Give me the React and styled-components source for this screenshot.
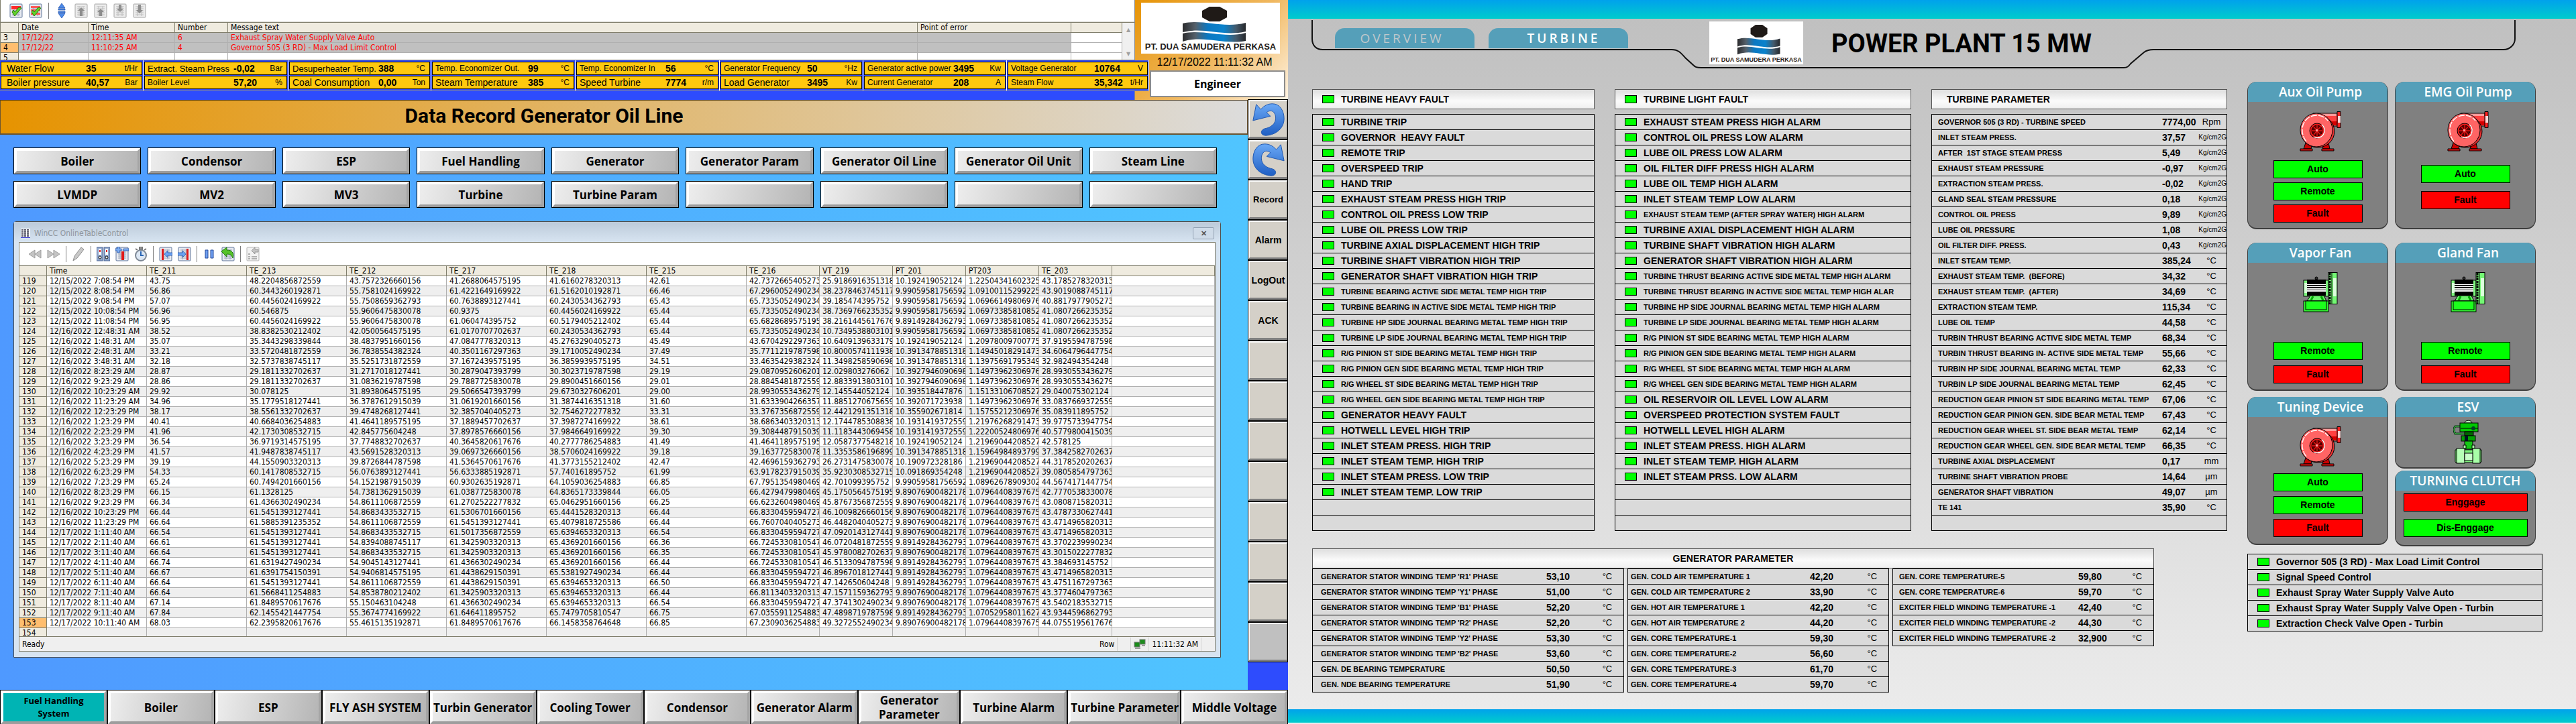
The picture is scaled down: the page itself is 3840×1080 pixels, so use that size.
import React from "react";
import styled, { createGlobalStyle, css } from "styled-components";

const TABLE_FONT = '"DejaVu Sans Condensed", "DejaVu Sans", sans-serif';
const UI_FONT = '"Open Sans", "Noto Sans", sans-serif';
const PLAIN_FONT = '"Liberation Sans", Arial, sans-serif';
const TITLE_FONT = 'Roboto, "Liberation Sans", sans-serif';

const GlobalStyle = createGlobalStyle`
  *, *::before, *::after { box-sizing: border-box; }
  body { margin: 0; background: #fff; color: #000; font-family: ${PLAIN_FONT}; }
  button { font: inherit; color: inherit; margin: 0; padding: 0; cursor: pointer; }
  svg { display: block; }
`;

/* ---------- data ---------- */

const ALARMS = [
  { no: 3, date: "17/12/22", time: "12:11:35 AM", number: 6, text: "Exhaust Spray Water Supply Valve Auto" },
  { no: 4, date: "17/12/22", time: "11:10:25 AM", number: 4, text: "Governor 505 (3 RD) - Max Load Limit Control", current: true },
];

const READINGS = [
  [["Water Flow", "35", "t/Hr", 14], ["Boiler pressure", "40,57", "Bar", 14]],
  [["Extract. Steam Press", "-0,02", "Bar", 13], ["Boiler Level", "57,20", "%", 12]],
  [["Desuperheater Temp.", "388", "°C", 13], ["Coal Consumption", "0,00", "Ton", 14]],
  [["Temp. Economizer Out.", "99", "°C", 12], ["Steam Temperature", "385", "°C", 14]],
  [["Temp. Economizer In", "56", "°C", 12], ["Speed Turbine", "7774", "r/m", 14]],
  [["Generator Frequency", "50", "°Hz", 12], ["Load Generator", "3495", "Kw", 14]],
  [["Generator active power", "3495", "Kw", 12], ["Current Generator", "208", "A", 12]],
  [["Voltage Generator", "10764", "V", 12], ["Steam Flow", "35,342", "t/Hr", 12]],
];

/* Width of the label column in each pair of readings. */
const LABEL_WIDTHS = [118, 128, 128, 138, 128, 124, 128, 124];

const PAGE_LINKS = [
  "Boiler", "Condensor", "ESP", "Fuel Handling", "Generator", "Generator Param", "Generator Oil Line", "Generator Oil Unit", "Steam Line",
  "LVMDP", "MV2", "MV3", "Turbine", "Turbine Param", "", "", "", "",
];

const SIDE_LINKS = ["Record", "Alarm", "LogOut", "ACK", "", "", "", "", "", "", "", ""];

const SYSTEM_LINKS = [
  { label: "Fuel Handling System", active: true, wrap: true },
  { label: "Boiler" }, { label: "ESP" }, { label: "FLY ASH SYSTEM" }, { label: "Turbin Generator" },
  { label: "Cooling Tower" }, { label: "Condensor" }, { label: "Generator Alarm" },
  { label: "Generator Parameter", wrap: true },
  { label: "Turbine Alarm" }, { label: "Turbine Parameter" }, { label: "Middle Voltage" },
];

const TREND_COLUMNS = ["TE_211", "TE_213", "TE_212", "TE_217", "TE_218", "TE_215", "TE_216", "VT_219", "PT_201", "PT203", "TE_203"];

const TREND_ROWS = `
12/15/2022 7:08:54 PM|43.75|48.2204856872559|43.7572326660156|41.2688064575195|41.6160278320313|42.61|42.7372665405273|25.9186916351318|10.192419052124|1.22504341602325|43.1785278320313
12/15/2022 8:08:54 PM|56.86|60.3443260192871|55.7581024169922|61.4221649169922|61.5162010192871|66.46|67.2960052490234|38.2378463745117|9.99059581756592|1.09100115299225|43.9019088745117
12/15/2022 9:08:54 PM|57.07|60.4456024169922|55.7508659362793|60.7638893127441|60.2430534362793|65.43|65.7335052490234|39.185474395752|9.99059581756592|1.06966149806976|40.8817977905273
12/15/2022 10:08:54 PM|56.96|60.546875|55.9606475830078|60.9375|60.4456024169922|65.44|65.7335052490234|38.7369766235352|9.99059581756592|1.06973385810852|41.0807266235352
12/15/2022 11:08:54 PM|56.95|60.4456024169922|55.9606475830078|61.060474395752|60.5179405212402|65.44|65.6828689575195|38.2161445617676|9.89149284362793|1.06973385810852|41.0807266235352
12/16/2022 12:48:31 AM|38.52|38.8382530212402|42.0500564575195|61.0170707702637|60.2430534362793|65.44|65.7335052490234|10.7349538803101|9.99059581756592|1.06973385810852|41.0807266235352
12/16/2022 1:48:31 AM|35.07|35.3443298339844|38.4837951660156|47.0847778320313|45.2763290405273|45.49|43.6704292297363|10.6409139633179|10.192419052124|1.20978009700775|37.9195594787598
12/16/2022 2:48:31 AM|33.21|33.5720481872559|36.7838554382324|40.3501167297363|39.1710052490234|37.49|35.7711219787598|10.8000574111938|10.3913478851318|1.14945018291473|34.6064796447754
12/16/2022 3:48:31 AM|32.18|32.5737838745117|35.5251731872559|37.1672439575195|36.3859939575195|34.51|33.4635429382324|11.3498258590698|10.3913478851318|1.13975691795349|32.982494354248
12/16/2022 8:23:29 AM|28.87|29.1811332702637|31.2717018127441|30.2879047393799|30.3023719787598|29.19|29.0870952606201|12.029803276062|10.3927946090698|1.14973962306976|28.9930553436279
12/16/2022 9:23:29 AM|28.86|29.1811332702637|31.0836219787598|29.7887725830078|29.8900451660156|29.01|28.8845481872559|12.8833913803101|10.3927946090698|1.14973962306976|28.9930553436279
12/16/2022 10:23:29 AM|29.92|30.078125|31.8938064575195|29.5066547393799|29.6730327606201|29.00|28.9930553436279|12.145544052124|10.393518447876|1.15133106708527|29.040075302124
12/16/2022 11:23:29 AM|34.96|35.1779518127441|36.3787612915039|31.0619201660156|31.3874416351318|31.60|31.6333904266357|11.8851270675659|10.392071723938|1.14973962306976|33.0837669372559
12/16/2022 12:23:29 PM|38.17|38.5561332702637|39.4748268127441|32.3857040405273|32.7546272277832|33.31|33.3767356872559|12.4421291351318|10.355902671814|1.15755212306976|35.083911895752
12/16/2022 1:23:29 PM|40.41|40.6684036254883|41.4641189575195|37.1889457702637|37.3987274169922|38.61|38.6863403320313|12.1744785308838|10.1931419372559|1.21976268291473|39.9775733947754
12/16/2022 2:23:29 PM|41.96|42.1730308532715|42.845775604248|37.8978576660156|37.9846649169922|39.30|39.3084487915039|11.1183443069458|10.1931419372559|1.22200524806976|40.5779800415039
12/16/2022 3:23:29 PM|36.54|36.9719314575195|37.7748832702637|40.3645820617676|40.2777786254883|41.49|41.4641189575195|12.0587377548218|10.192419052124|1.21969044208527|42.578125
12/16/2022 4:23:29 PM|41.57|41.9487838745117|43.5691528320313|39.0697326660156|38.5706024169922|39.18|39.1637725830078|11.3353586196899|10.3913478851318|1.15964984893799|37.3842582702637
12/16/2022 5:23:29 PM|39.19|44.1550903320313|39.8726844787598|41.5364570617676|41.3773155212402|42.47|42.4696159362793|26.2731475830078|10.190972328186|1.21969044208527|44.3178520202637
12/16/2022 6:23:29 PM|54.33|60.1417808532715|56.0763893127441|56.6333885192871|57.740161895752|61.99|63.9178237915039|35.9230308532715|10.091869354248|1.21969044208527|39.0805854797363
12/16/2022 7:23:29 PM|65.24|60.7494201660156|54.1521987915039|60.9302635192871|64.1059036254883|66.85|67.7951354980469|42.701099395752|9.99059581756592|1.08962678909302|44.5674171447754
12/16/2022 8:23:29 PM|66.15|61.1328125|54.7381362915039|61.0387725830078|64.8365173339844|66.05|66.4279479980469|45.1750564575195|9.89076900482178|1.07964408397675|42.7770538330078
12/16/2022 9:23:29 PM|66.34|61.4366302490234|54.8611106872559|61.2702522277832|65.0462951660156|66.25|66.6232604980469|45.8767356872559|9.89076900482178|1.07964408397675|43.0808715820313
12/16/2022 10:23:29 PM|66.44|61.5451393127441|54.8683433532715|61.5306701660156|65.4441528320313|66.44|66.8330459594727|46.1009826660156|9.89076900482178|1.07964408397675|43.4787330627441
12/16/2022 11:23:29 PM|66.64|61.5885391235352|54.8611106872559|61.5451393127441|65.4079818725586|66.44|66.7607040405273|46.4482040405273|9.89076900482178|1.07964408397675|43.4714965820313
12/17/2022 1:11:40 AM|66.54|61.5451393127441|54.8683433532715|61.5017356872559|65.6394653320313|66.54|66.8330459594727|47.0920143127441|9.89076900482178|1.07964408397675|43.4714965820313
12/17/2022 2:11:40 AM|66.61|61.5451393127441|54.8394088745117|61.3425903320313|65.4369201660156|66.36|66.7245330810547|46.0720481872559|9.89149284362793|1.07964408397675|43.3702239990234
12/17/2022 3:11:40 AM|66.64|61.5451393127441|54.8683433532715|61.3425903320313|65.4369201660156|66.35|66.7245330810547|45.9780082702637|9.89076900482178|1.07964408397675|43.3015022277832
12/17/2022 4:11:40 AM|66.74|61.6319427490234|54.9045143127441|61.4366302490234|65.4369201660156|66.44|66.7245330810547|46.5133094787598|9.89149284362793|1.07964408397675|43.384693145752
12/17/2022 5:11:40 AM|66.67|61.6391754150391|54.9406814575195|61.4438629150391|65.5381927490234|66.44|66.8330459594727|46.8967018127441|9.89149284362793|1.07964408397675|43.4714965820313
12/17/2022 6:11:40 AM|66.64|61.5451393127441|54.8611106872559|61.4438629150391|65.6394653320313|66.50|66.8330459594727|47.142650604248|9.89149284362793|1.07964408397675|43.4751167297363
12/17/2022 7:11:40 AM|66.64|61.5668411254883|54.8538780212402|61.3425903320313|65.6394653320313|66.44|66.8113403320313|47.1571159362793|9.89076900482178|1.07964408397675|43.3774604797363
12/17/2022 8:11:40 AM|67.14|61.8489570617676|55.150463104248|61.4366302490234|65.6394653320313|66.54|66.8330459594727|47.3741302490234|9.89076900482178|1.07964408397675|43.5402183532715
12/17/2022 9:11:40 AM|67.84|62.1455421447754|55.3674774169922|61.646411895752|65.7479705810547|66.75|67.0355911254883|47.4898719787598|9.89149284362793|1.07052958011627|43.9344596862793
12/17/2022 10:11:40 AM|68.03|62.2395820617676|55.4615135192871|61.8489570617676|66.1458358764648|66.85|67.2309036254883|49.3272552490234|9.89076900482178|1.07964408397675|44.0755195617676
`.trim().split("\n").map((line) => line.split("|"));

const FIRST_ROW = 119;

/* A leading "~" marks the long entries that are set in the smaller size. */
const HEAVY_FAULTS = [
  "TURBINE TRIP", "GOVERNOR\u00a0 HEAVY FAULT", "REMOTE TRIP", "OVERSPEED TRIP", "HAND TRIP",
  "EXHAUST STEAM PRESS HIGH TRIP", "CONTROL OIL PRESS LOW TRIP", "LUBE OIL PRESS LOW TRIP",
  "TURBINE AXIAL DISPLACEMENT HIGH TRIP", "TURBINE SHAFT VIBRATION HIGH TRIP", "GENERATOR SHAFT VIBRATION HIGH TRIP",
  "~TURBINE BEARING ACTIVE SIDE METAL TEMP HIGH TRIP", "~TURBINE BEARING IN ACTIVE SIDE METAL TEMP HIGH TRIP",
  "~TURBINE HP SIDE JOURNAL BEARING METAL TEMP HIGH TRIP", "~TURBINE LP SIDE JOURNAL BEARING METAL TEMP HIGH TRIP",
  "~R/G PINION ST SIDE BEARING METAL TEMP HIGH TRIP", "~R/G PINION GEN SIDE BEARING METAL TEMP HIGH TRIP",
  "~R/G WHEEL ST SIDE BEARING METAL TEMP HIGH TRIP", "~R/G WHEEL GEN SIDE BEARING METAL TEMP HIGH TRIP",
  "GENERATOR HEAVY FAULT", "HOTWELL LEVEL HIGH TRIP", "INLET STEAM PRESS. HIGH TRIP",
  "INLET STEAM TEMP. HIGH TRIP", "INLET STEAM PRESS. LOW TRIP", "INLET STEAM TEMP. LOW TRIP", "", "",
];

const LIGHT_FAULTS = [
  "EXHAUST STEAM PRESS HIGH ALARM", "CONTROL OIL PRESS LOW ALARM", "LUBE OIL PRESS LOW ALARM",
  "OIL FILTER DIFF PRESS HIGH ALARM", "LUBE OIL TEMP HIGH ALARM", "INLET STEAM TEMP LOW ALARM",
  "~EXHAUST STEAM TEMP (AFTER SPRAY WATER) HIGH ALARM", "TURBINE AXIAL DISPLACEMENT HIGH ALARM",
  "TURBINE SHAFT VIBRATION HIGH ALARM", "GENERATOR SHAFT VIBRATION HIGH ALARM",
  "~TURBINE THRUST BEARING ACTIVE SIDE METAL TEMP HIGH ALARM", "~TURBINE THRUST BEARING IN ACTIVE SIDE METAL TEMP HIGH ALAR",
  "~TURBINE HP SIDE JOURNAL BEARING METAL TEMP HIGH ALARM", "~TURBINE LP SIDE JOURNAL BEARING METAL TEMP HIGH ALARM",
  "~R/G PINION ST SIDE BEARING METAL TEMP HIGH ALARM", "~R/G PINION GEN SIDE BEARING METAL TEMP HIGH ALARM",
  "~R/G WHEEL ST SIDE BEARING METAL TEMP HIGH ALARM", "~R/G WHEEL GEN SIDE BEARING METAL TEMP HIGH ALARM",
  "OIL RESERVOIR OIL LEVEL LOW ALARM", "OVERSPEED PROTECTION SYSTEM FAULT", "HOTWELL LEVEL HIGH ALARM",
  "INLET STEAM PRESS. HIGH ALARM", "INLET STEAM TEMP. HIGH ALARM", "INLET STEAM PRSS. LOW ALARM", "", "", "",
];

const TURBINE_PARAMS = [
  ["GOVERNOR 505 (3 RD) - TURBINE SPEED", "7774,00", "Rpm"],
  ["INLET STEAM PRESS.", "37,57", "Kg/cm2G"],
  ["AFTER\u00a0 1ST STAGE STEAM PRESS", "5,49", "Kg/cm2G"],
  ["EXHAUST STEAM PRESSURE", "-0,97", "Kg/cm2G"],
  ["EXTRACTION STEAM PRESS.", "-0,02", "Kg/cm2G"],
  ["GLAND SEAL STEAM PRESSURE", "0,18", "Kg/cm2G"],
  ["CONTROL OIL PRESS", "9,89", "Kg/cm2G"],
  ["LUBE OIL PRESSURE", "1,08", "Kg/cm2G"],
  ["OIL FILTER DIFF. PRESS.", "0,43", "Kg/cm2G"],
  ["INLET STEAM TEMP.", "385,24", "°C"],
  ["EXHAUST STEAM TEMP.\u00a0 (BEFORE)", "34,32", "°C"],
  ["EXHAUST STEAM TEMP.\u00a0 (AFTER)", "34,69", "°C"],
  ["EXTRACTION STEAM TEMP.", "115,34", "°C"],
  ["LUBE OIL TEMP", "44,58", "°C"],
  ["TURBIN THRUST BEARING ACTIVE SIDE METAL TEMP", "68,34", "°C"],
  ["TURBIN THRUST BEARING IN- ACTIVE SIDE METAL TEMP", "55,66", "°C"],
  ["TURBIN HP SIDE JOURNAL BEARING METAL TEMP", "62,33", "°C"],
  ["TURBIN LP SIDE JOURNAL BEARING METAL TEMP", "62,45", "°C"],
  ["REDUCTION GEAR PINION ST SIDE BEARING METAL TEMP", "67,06", "°C"],
  ["REDUCTION GEAR PINION GEN. SIDE BEAR METAL TEMP", "67,43", "°C"],
  ["REDUCTION GEAR WHEEL ST. SIDE BEAR METAL TEMP", "62,14", "°C"],
  ["REDUCTION GEAR WHEEL GEN. SIDE BEAR METAL TEMP", "66,35", "°C"],
  ["TURBINE AXIAL DISPLACEMENT", "0,17", "mm"],
  ["TURBINE SHAFT VIBRATION PROBE", "14,64", "µm"],
  ["GENERATOR SHAFT VIBRATION", "49,07", "µm"],
  ["TE 141", "35,90", "°C"],
  ["", "", ""],
];

const GENERATOR_PARAMS = [
  {
    indent: 12, valueAt: 348,
    rows: [
      ["GENERATOR STATOR WINDING TEMP 'R1' PHASE", "53,10"],
      ["GENERATOR STATOR WINDING TEMP 'Y1' PHASE", "51,00"],
      ["GENERATOR STATOR WINDING TEMP 'B1' PHASE", "52,20"],
      ["GENERATOR STATOR WINDING TEMP 'R2' PHASE", "52,20"],
      ["GENERATOR STATOR WINDING TEMP 'Y2' PHASE", "53,30"],
      ["GENERATOR STATOR WINDING TEMP 'B2' PHASE", "53,60"],
      ["GEN. DE BEARING TEMPERATURE", "50,50"],
      ["GEN. NDE BEARING TEMPERATURE", "51,90"],
    ],
  },
  {
    indent: 4, valueAt: 271,
    rows: [
      ["GEN. COLD AIR TEMPERATURE 1", "42,20"],
      ["GEN. COLD AIR TEMPERATURE 2", "33,90"],
      ["GEN. HOT AIR TEMPERATURE 1", "42,20"],
      ["GEN. HOT AIR TEMPERATURE 2", "44,20"],
      ["GEN. CORE TEMPERATURE-1", "59,30"],
      ["GEN. CORE TEMPERATURE-2", "56,60"],
      ["GEN. CORE TEMPERATURE-3", "61,70"],
      ["GEN. CORE TEMPERATURE-4", "59,70"],
    ],
  },
  {
    indent: 9, valueAt: 276,
    rows: [
      ["GEN. CORE TEMPERATURE-5", "59,80"],
      ["GEN. CORE TEMPERATURE-6", "59,70"],
      ["EXCITER FIELD WINDING TEMPERATURE -1", "42,40"],
      ["EXCITER FIELD WINDING TEMPERATURE -2", "44,30"],
      ["EXCITER FIELD WINDING TEMPERATURE -2", "32,900"],
    ],
  },
];

const SIGNALS = [
  "Governor 505 (3 RD) - Max Load Limit Control",
  "Signal Speed Control",
  "Exhaust Spray Water Supply Valve Auto",
  "Exhaust Spray Water Supply Valve Open - Turbin",
  "Extraction Check Valve Open - Turbin",
];

/* ---------- drawings ---------- */

function LogoMark({ height }) {
  return (
    <svg width="100%" height={height} viewBox="0 0 207 60" preserveAspectRatio="none" aria-hidden="true">
      <defs>
        <linearGradient id="wave" x1="0" x2="1">
          <stop offset="0" stopColor="#2b2b2d" />
          <stop offset="0.2" stopColor="#55606a" />
          <stop offset="0.4" stopColor="#0a78c2" />
          <stop offset="0.65" stopColor="#0a82cc" />
          <stop offset="0.85" stopColor="#44596a" />
          <stop offset="1" stopColor="#26282c" />
        </linearGradient>
      </defs>
      <path d="M102 6h15l11 6v10l-11 6h-15l-11-6V12z" fill="#1f1a17" />
      <path d="M62 31c30-7 60 8 94-1v13c-34 8-62-7-94 1z" fill="url(#wave)" />
      <path d="M62 46c30-7 62 8 94-1v12c-34 6-62-9-94 1z" fill="url(#wave)" />
    </svg>
  );
}

function TurnArrow({ flip }) {
  return (
    <svg width="54" height="52" viewBox="0 0 56 56" preserveAspectRatio="none" aria-hidden="true">
      <defs>
        <linearGradient id="turn" x1="0" y1="0" x2="0" y2="1">
          <stop offset="0" stopColor="#6aa8f5" />
          <stop offset="1" stopColor="#1f5fc4" />
        </linearGradient>
      </defs>
      <path
        transform={flip ? "translate(56 0) scale(-1 1)" : undefined}
        d="M9 4l7 8C21 6 27 3 34 3c12 0 18 12 18 24 0 15-12 26-28 27-9 0-9-9-2-11 10-2 17-8 17-17 0-10-7-15-14-9l6 6-27 7z"
        fill="url(#turn)" stroke="#1d55ad" strokeWidth="1"
      />
    </svg>
  );
}

const sheet = (dim) => (
  <>
    <rect x="1" y="1" width="18" height="20" rx="1" fill={dim ? "#ececec" : "#e6e9f0"} stroke={dim ? "#a6a6a6" : "#60779b"} />
    <path d="M4 5h12M4 8h12M4 11h12M4 14h12M4 17h12M7 4v15M13 4v15" stroke={dim ? "#bdbdbd" : "#9aa5b8"} strokeWidth="1" />
  </>
);
const check = <path d="M4 13l4 6 10-12-4-1-6 7-2-3z" fill="#5fd12c" stroke="#2c7a10" />;

const ICONS = {
  ackOne: <>{sheet()}<path d="M3 4h14v5H3z" fill="#ff2b2b" />{check}</>,
  ackAll: <>{sheet()}<path d="M3 4h14v3H3zM3 9h14v3H3zM3 14h14v3H3z" fill="#ff5a5a" />{check}</>,
  updown: <path d="M10 0l5 7H5zM5 8h10v2H5zM5 12h10v2H5zM10 22l5-7H5z" fill="#4d8bea" stroke="#1c4ea8" strokeWidth=".7" />,
  first: <>{sheet(true)}<path d="M10 6l5 5h-3v8H8v-8H5z" fill="#8d8d8d" /></>,
  prev: <>{sheet(true)}<path d="M10 8l5 5h-3v6H8v-6H5z" fill="#8d8d8d" /></>,
  next: <>{sheet(true)}<path d="M10 13l5-5h-3V2H8v6H5z" fill="#8d8d8d" /></>,
  last: <>{sheet(true)}<path d="M10 15l5-5h-3V2H8v8H5z" fill="#8d8d8d" /></>,
  rewind: <path d="M10 5v12L1 11zM19 5v12l-9-6z" fill="#c4c4c4" stroke="#9e9e9e" />,
  forward: <path d="M1 5v12l9-6zM10 5v12l9-6z" fill="#c4c4c4" stroke="#9e9e9e" />,
  pencil: <path d="M2 21l2-7L14 1l4 3L8 17z" fill="#c9c9c9" stroke="#8f8f8f" />,
  binders: (
    <>
      <rect x="0" y="1" width="9" height="20" fill="#8fa6cc" stroke="#4d6797" />
      <rect x="11" y="1" width="9" height="20" fill="#8fa6cc" stroke="#4d6797" />
      <path d="M3 3h4v9H3zM13 3h4v9h-4z" fill="#fff" /><path d="M4 5h2v3H4zM14 5h2v3h-2z" fill="#d22" />
      <circle cx="5" cy="16" r="2" fill="#fff" stroke="#111" /><circle cx="15" cy="16" r="2" fill="#fff" stroke="#111" />
    </>
  ),
  columns: <>{sheet()}<path d="M9 7h4v13H9z" fill="#e01919" /><path d="M0 3h3V0h3v3h3v3H6v3H3V6H0zM12 3h8v3h-8z" fill="#7fb0f5" stroke="#1c4ea8" strokeWidth=".8" /></>,
  clock: <><path d="M8 0h4v4H8zM2 3l3 2M18 3l-3 2" stroke="#777" fill="#999" strokeWidth="2" /><circle cx="10" cy="13" r="8" fill="#dce7f4" stroke="#7d8794" strokeWidth="2" /><path d="M10 7v6h4" fill="none" stroke="#2a66b5" strokeWidth="2" /></>,
  toLeft: <>{sheet()}<path d="M4 3h3v17H4z" fill="#e01919" /><path d="M8 11l5-5v3h7v4h-7v3z" fill="#6ba2f2" stroke="#1c4ea8" strokeWidth=".8" /></>,
  toRight: <>{sheet()}<path d="M13 3h3v17h-3z" fill="#e01919" /><path d="M12 11L7 6v3H0v4h7v3z" fill="#6ba2f2" stroke="#1c4ea8" strokeWidth=".8" /></>,
  pause: <path d="M4 5h4v12H4zM12 5h4v12h-4z" fill="#6f9ff0" stroke="#23499b" />,
  refresh: <>{sheet()}<path d="M0 7l8-6v4c8 0 11 4 9 12-2-5-4-6-9-6v4z" fill="#56c22a" stroke="#1f7a0c" /></>,
  exportList: <><rect x="1" y="1" width="18" height="20" rx="1" fill="#f2f2f2" stroke="#b5b5b5" /><path d="M3 11h3M3 15h3M8 15h8M3 18h3M8 18h8" stroke="#b0b0b0" strokeWidth="2" /><path d="M8 6l5-5v3h5v4h-5v3z" fill="#c4c4c4" stroke="#999" /></>,
};

function ToolIcon({ name }) {
  return <svg width="20" height="22" viewBox="0 0 20 22" aria-hidden="true">{ICONS[name]}</svg>;
}

function PumpIcon() {
  return (
    <svg width="62" height="60" viewBox="0 0 62 60" aria-hidden="true">
      <path d="M9 47h10l-2 9H6zM43 47H33l2 9h10z" fill="#c00" stroke="#000" />
      <path d="M1 56h18v3H1zM33 56h18v3H33z" fill="#e01010" stroke="#000" />
      <path d="M20 3h36v19H44z" fill="#ff9a9a" stroke="#000" />
      <path d="M38 7h18v8H42z" fill="#ff4040" /><path d="M44 15h12v6H47z" fill="#d60000" />
      <ellipse cx="27" cy="30" rx="25" ry="24" fill="#e83030" stroke="#000" />
      <ellipse cx="25" cy="28" rx="24" ry="25" fill="#ff6464" stroke="#000" />
      <path d="M10 45C-2 30 4 7 25 6c8 0 13 3 17 8" fill="none" stroke="#fff" strokeWidth="1.3" strokeDasharray="9 2" />
      <circle cx="26" cy="29" r="11" fill="#f01818" stroke="#000" />
      <path d="M33 20c6 5 5 14-1 18-4 2-8 2-11 0" fill="none" stroke="#fff" strokeWidth="1.4" />
      <circle cx="26" cy="29" r="8" fill="#5a0000" stroke="#200" />
      <path d="M26 21v16M18 29h16M21 23l10 12M31 23L21 35" stroke="#e01515" strokeWidth="1.4" />
      <rect x="24" y="27" width="3" height="3" fill="#ff9c9c" />
      <path d="M56 .5h5v24h-5z" fill="#f22" stroke="#000" /><path d="M57 7h4v10h-4z" fill="#ffd9d9" />
    </svg>
  );
}

function FanIcon() {
  return (
    <svg width="52" height="60" viewBox="0 0 52 60" aria-hidden="true">
      <circle cx="20" cy="9" r="2" fill="#333" stroke="#000" />
      <rect x="1" y="12" width="37" height="24" fill="#7cf57c" stroke="#000" />
      <rect x="2" y="16" width="5" height="15" fill="#d8ffd8" />
      <rect x="6" y="11" width="28" height="24" fill="#fff" />
      <path d="M6 11h28v7H6zM6 19h28v2H6zM6 22h28v2H6zM6 26h28v1H6zM6 29h28v6H6z" fill="#000" />
      <path d="M11 35h20l4 8H6z" fill="#6bf56b" stroke="#000" /><path d="M15 36l-3 6M27 36l3 6" stroke="#0a0" strokeWidth="3" />
      <rect x="1" y="43" width="37" height="16" fill="#33ff33" stroke="#000" />
      <rect x="4" y="43" width="31" height="13" fill="#1cff1c" stroke="#000" />
      <rect x="38" y="0.5" width="13" height="47" fill="#74f774" stroke="#000" />
      <rect x="45" y="9" width="5" height="27" fill="#dcffdc" />
      <path d="M40 1v46" stroke="#000" strokeWidth="3" strokeDasharray="3 1" /><path d="M43 1v46" stroke="#000" strokeWidth="1" />
    </svg>
  );
}

function ValveIcon() {
  return (
    <svg width="44" height="66" viewBox="0 0 44 66" aria-hidden="true">
      <path d="M10 10H3c-3 3-2 8 0 11h14" fill="none" stroke="#031" strokeWidth="3" />
      <path d="M10 10H3c-3 3-2 8 0 11h14" fill="none" stroke="#5fe35f" strokeWidth="1" />
      <path d="M17 5c0-5 11-5 11 0z" fill="#b9ffb9" stroke="#000" />
      <rect x="10" y="5" width="27" height="13" fill="#00c800" stroke="#000" />
      <path d="M11 13h26" stroke="#000" /><circle cx="30" cy="13" r="3" fill="#042" />
      <rect x="17" y="18" width="13" height="6" fill="#006400" stroke="#000" />
      <rect x="12" y="24" width="21" height="8" fill="#00a000" stroke="#000" /><rect x="17" y="24" width="5" height="8" fill="#012" />
      <rect x="17" y="32" width="12" height="12" fill="#14c814" stroke="#000" />
      <path d="M15 38h4v5h-4zM28 38h4v5h-4z" fill="#a6ffa6" stroke="#000" />
      <path d="M3 45h39v18l-2 1H4l-1-1z" fill="#7df57d" stroke="#000" />
      <rect x="5" y="43" width="12" height="22" fill="#b6ffb6" stroke="#000" />
      <rect x="29" y="43" width="11" height="22" fill="#a8ffa8" stroke="#000" />
      <rect x="17" y="50" width="12" height="11" fill="#c8ffc8" stroke="#000" />
    </svg>
  );
}

/* ---------- shared parts ---------- */

const Desktop = styled.div`
  display: grid;
  grid-template-columns: 1fr 1fr;
  min-height: 100vh;
`;

const LogoBox = styled.div`
  background: #fff;
  text-align: center;
  overflow: hidden;
`;

const LogoText = styled.div`
  font: bold ${(p) => p.$size}px/12px ${PLAIN_FONT};
  color: #1f1a17;
  white-space: nowrap;
`;

const BevelButton = styled.button`
  margin: 1px;
  border: 4px solid;
  border-color: #fff #a5a5a5 #9d9d9d #fff;
  outline: 1px solid #000;
  background: linear-gradient(100deg, #ededed, #b5b5b5);
  font: bold 17px/21px ${UI_FONT};
  white-space: nowrap;
`;

/* ---------- left screen ---------- */

const Station = styled.div`
  display: flex;
  flex-direction: column;
  min-width: 0;
  background: #2e4cfd;
`;

const TopArea = styled.header`
  display: flex;
  height: 150px;
  border-bottom: 1px solid #4a3a20;
`;

const TopLeft = styled.div`
  flex: 1;
  min-width: 0;
`;

const AlarmControl = styled.section`
  height: 90px;
  overflow: hidden;
  background: #fff;
  border-left: 1px solid #817f6d;
  border-bottom: 1px solid #817f6d;
`;

const ToolRow = styled.div`
  display: flex;
  align-items: center;
  gap: ${(p) => p.$gap}px;
  height: ${(p) => p.$height}px;
  padding-left: 13px;
  border-bottom: 1px solid #d6d6d0;
`;

const ToolButton = styled.button`
  display: block;
  border: 0;
  background: none;
`;

const Divider = styled.span`
  width: 1px;
  height: 24px;
  background: #7d7d7d;
`;

const AlarmBody = styled.div`
  display: flex;
  height: 57px;
  overflow: hidden;
`;

const GridTable = styled.table`
  flex: 1;
  width: 100%;
  table-layout: fixed;
  border-spacing: 0;
  border-top: 1px solid #817f6d;
  font: 12px/14px ${TABLE_FONT};

  th, td {
    height: 15px;
    padding: 0 0 0 4px;
    border-right: 1px solid #b0b0b0;
    border-bottom: 1px solid #b0b0b0;
    overflow: hidden;
    text-align: left;
    font-weight: 400;
    white-space: nowrap;
  }
  thead th, tbody th {
    background: #efebdf;
    border-color: #817f6d;
  }
  tbody tr:nth-child(${(p) => p.$shade}) td { background: #efefef; }
`;

const RowHead = styled.th`
  && { background: ${(p) => (p.$current ? "#ffbe6f" : "#efebdf")}; }
`;

const AlarmCell = styled.td`
  &&& { background: #c0c0c0; color: #ff0000; }
`;

const ScrollTrack = styled.div`
  display: flex;
  flex-direction: column;
  align-items: center;
  justify-content: space-between;
  width: 18px;
  padding: 6px 0 4px;
  background: #f0f0f0;
  border-top: 1px solid #817f6d;
  color: #a0a0a0;
  font: 8px/10px "DejaVu Sans", sans-serif;
`;

const Readings = styled.div`
  position: relative;
  display: grid;
  grid-template-columns: 214fr 216fr 213fr 215fr 215fr 214fr 214fr 212fr;
  margin-right: -22px;
  background: #2e4cfd;
  border-bottom: 1px solid #8a8a90;
`;

const ReadingPair = styled.div`
  display: grid;
  grid-template-rows: 20px 20px;
  gap: 1px;
  padding: 2px 1px;
  border-right: 1px solid #fff;
  min-width: 0;
`;

const Reading = styled.div`
  display: grid;
  grid-template-columns: ${(p) => p.$label}px 1fr auto;
  align-items: center;
  padding: 0 6px 0 ${(p) => (p.$first ? 8 : 4)}px;
  border: 1px solid #000;
  background: #ffc90e;
  white-space: nowrap;
  min-width: 0;
  overflow: hidden;
`;

const ReadingLabel = styled.span`
  font-size: ${(p) => p.$size}px;
`;

const ReadingValue = styled.output`
  font-size: 14px;
  font-weight: 700;
`;

const ReadingUnit = styled.span`
  font-size: 12px;
`;

const Identity = styled.div`
  display: flex;
  flex-direction: column;
  align-items: center;
  width: 229px;
  padding: 4px 4px 4px 1px;
  border-left: 1px solid #888;
  background: linear-gradient(135deg, #e69305, #f0b860 55%, #fff4e4);

  ${LogoBox} { width: 207px; height: 76px; }
`;

const Clock = styled.time`
  margin-left: 12px;
  font-size: 16px;
  line-height: 25px;
`;

const UserButton = styled.button`
  align-self: flex-end;
  width: 202px;
  height: 40px;
  border: 2px solid #8c8c8c;
  background: #fff;
  font: bold 16px/20px ${UI_FONT};
`;

const Middle = styled.div`
  flex: 1;
  display: flex;
`;

const PageArea = styled.main`
  flex: 1;
  min-width: 0;
  display: flex;
  flex-direction: column;
  background: linear-gradient(90deg, #4f99ff, #50c5ff);
`;

const PageTitle = styled.h1`
  margin: 0;
  height: 51px;
  padding-right: 238px;
  border: 1px solid #6b5430;
  border-width: 0 1px 2px;
  background: linear-gradient(90deg, #e69300, #dcdcdc);
  font: bold 30px/46px ${TITLE_FONT};
  text-align: center;
`;

const PageLinks = styled.nav`
  display: grid;
  grid-template-columns: repeat(9, 1fr);
  grid-auto-rows: 40px;
  gap: 10px;
  padding: 19px 46px 20px 20px;
`;

const WindowFrame = styled.section`
  margin: 0 40px 0 20px;
  padding: 0 7px 8px;
  border: 1px solid #4c4c4c;
  border-radius: 4px 4px 0 0;
  background: #d7e4f1;
`;

const WindowTitle = styled.div`
  display: flex;
  align-items: center;
  gap: 6px;
  height: 30px;
  margin: 0 -7px;
  padding: 4px 9px 0 10px;
  background: linear-gradient(#bccad9, #d7e4f1);
  color: #8f969e;
  font: 12px/16px ${TABLE_FONT};
`;

const CloseButton = styled.button`
  margin-left: auto;
  width: 32px;
  height: 18px;
  border: 1px solid #93a2b3;
  border-radius: 2px;
  background: #cfdbe8;
  color: #555;
  font: bold 11px/12px ${PLAIN_FONT};
`;

const WindowBody = styled.div`
  border: 1px solid #817f6d;
  background: #fff;
`;

const TrendClip = styled.div`
  height: 554px;
  overflow: hidden;
  border-bottom: 1px solid #817f6d;
`;

const StatusBar = styled.div`
  display: flex;
  align-items: center;
  height: 21px;
  padding: 0 20px 0 4px;
  background: #efefef;
  font: 12px/20px ${TABLE_FONT};
`;

const StatusCell = styled.span`
  display: flex;
  align-items: center;
  height: 20px;
  min-width: 20px;
  padding: 0 4px;
  border-right: 1px solid #d4d4d4;
  ${(p) => p.$push && css`margin-left: auto;`}
`;

const SideBar = styled.aside`
  width: 60px;
  margin-top: -2px;
`;

const SideButton = styled.button`
  display: flex;
  align-items: center;
  justify-content: center;
  width: 100%;
  height: 60px;
  border: 2px solid;
  border-color: #fff #808080 #808080 #fff;
  outline: 1px solid #000;
  outline-offset: -1px;
  border-width: 3px 2px 4px 3px;
  background: ${(p) => (p.$dim ? "#c0c0c0" : "#d4d0c8")};
  font: bold ${(p) => p.$size || 14}px/16px ${PLAIN_FONT};
`;

const SystemBar = styled.nav`
  display: grid;
  grid-template-columns: repeat(8, 160fr) 152fr 160fr 169fr 160fr;
  height: 50px;
`;

const SystemButton = styled(BevelButton)`
  min-width: 0;
  margin: 0 1px;
  white-space: ${(p) => (p.$wrap ? "normal" : "nowrap")};
  ${(p) => p.$active && css`
    background: #00b4b4;
    font-size: 13px;
    line-height: 19px;
    padding: 0 20px;
  `}
`;

/* ---------- right screen ---------- */

const Overview = styled.div`
  display: flex;
  flex-direction: column;
  min-width: 0;
  padding-bottom: 2px;
  background: linear-gradient(#bfbfbf, #ececec);
`;

const Band = styled.div`
  height: ${(p) => p.$height}px;
  background: linear-gradient(#00a2ec, #00cccc);
`;

const PlantHeader = styled.header`
  position: relative;
  display: flex;
  align-items: flex-start;
  height: 94px;
  padding-left: 70px;
`;

const HeaderLine = styled.svg`
  position: absolute;
  inset: 0;
  width: 100%;
  height: 80px;
`;

const Tab = styled.button`
  width: 208px;
  height: 30px;
  margin: 14px 21px 0 0;
  padding-left: ${(p) => (p.$active ? 16 : 0)}px;
  padding-right: ${(p) => (p.$active ? 0 : 8)}px;
  border: 0;
  border-radius: 14px 14px 0 0;
  background: #559fb9;
  color: ${(p) => (p.$active ? "#fff" : "#c0c8cc")};
  font: ${(p) => (p.$active ? 600 : 400)} 19px/28px ${UI_FONT};
  letter-spacing: 4px;
  position: relative;
`;

const PlantLogo = styled(LogoBox)`
  position: relative;
  width: 140px;
  height: 64px;
  margin: 4px 42px 0 100px;
`;

const PlantTitle = styled.h1`
  position: relative;
  margin: 15px 0 0;
  font: bold 38px/44px ${TITLE_FONT};
  white-space: nowrap;
`;

const PlantBody = styled.div`
  flex: 1;
  display: flex;
  gap: 30px;
  padding: 0 50px 0 36px;
`;

const Lists = styled.div`
  flex: 1;
  min-width: 0;
  padding-top: 11px;
`;

const ListColumns = styled.div`
  display: grid;
  grid-template-columns: 421fr 442fr 441fr;
  gap: 30px;
`;

const Heading = styled.h2`
  display: flex;
  align-items: center;
  justify-content: ${(p) => (p.$center ? "center" : "flex-start")};
  gap: 10px;
  height: 30px;
  margin: 0;
  padding-left: ${(p) => p.$indent || 0}px;
  border: 1px solid #555;
  background: linear-gradient(#dedede, #fbfbfb 60%, #f0f0f0);
  font: bold 14px/16px ${PLAIN_FONT};
`;

const RowList = styled.ul`
  margin: ${(p) => p.$top || 0}px 0 0;
  padding: 0;
  list-style: none;
  border: 1px solid #000;
  border-bottom: 0;
  background: #dadada;
`;

const Row = styled.li`
  display: flex;
  align-items: center;
  gap: 10px;
  height: 23px;
  padding-left: 14px;
  border-bottom: 1px solid #000;
  font: bold ${(p) => p.$size}px/16px ${PLAIN_FONT};
  white-space: nowrap;
`;

const Lamp = styled.i`
  width: 18px;
  height: 12px;
  border: 1px solid #000;
  background: #00ff00;
`;

const ParamTable = styled.table`
  width: 100%;
  table-layout: fixed;
  border-spacing: 0;
  margin-top: ${(p) => p.$top || 0}px;
  border: 1px solid #000;
  border-bottom: 0;
  background: #dadada;
  font: bold 11px/16px ${PLAIN_FONT};
  white-space: nowrap;

  th, td {
    height: 23px;
    padding: 0;
    border-bottom: 1px solid #000;
    text-align: left;
    font-weight: 700;
  }
  th { padding-left: ${(p) => p.$indent}px; }
  td:nth-child(2) { font-size: 14px; }
`;

const UnitCell = styled.td`
  && {
    font-weight: 400;
    font-size: ${(p) => (p.$small ? 10 : 13)}px;
    text-align: ${(p) => (p.$small ? "right" : "center")};
  }
`;

const GeneratorPanel = styled.section`
  width: 92%;
  margin-top: 26px;
`;

const GeneratorTables = styled.div`
  display: grid;
  grid-template-columns: 465fr 390fr 390fr;
  align-items: start;
  gap: 5px;
`;

const Equipment = styled.div`
  width: 440px;
`;

const CardColumns = styled.div`
  display: grid;
  grid-template-columns: 210px 210px;
  gap: 10px;
`;

const CardStack = styled.div`
  display: flex;
  flex-direction: column;
`;

const Card = styled.section`
  height: ${(p) => p.$height}px;
  margin-bottom: ${(p) => p.$after || 0}px;
  border: 1px solid #3d3d3d;
  border-top: 0;
  border-bottom-width: 2px;
  border-radius: 14px;
  background: #808080;
`;

const CardTitle = styled.h3`
  height: 30px;
  margin: 0;
  padding-left: ${(p) => (p.$wide ? 0 : 8)}px;
  border-radius: 13px 13px 0 0;
  background: #559fb9;
  color: #fff;
  font: 600 19px/30px ${UI_FONT};
  text-align: center;
  white-space: nowrap;
`;

const CardBody = styled.div`
  display: flex;
  flex-direction: column;
  align-items: center;
  gap: ${(p) => p.$gap || 0}px;
  padding-top: ${(p) => p.$top}px;
`;

const CardIcon = styled.div`
  margin-left: 8px;
  margin-bottom: ${(p) => p.$below || 0}px;
`;

const State = styled.div`
  width: ${(p) => (p.$wide ? 185 : 133)}px;
  height: 27px;
  border: 1px solid #000;
  background: ${(p) => (p.$bad ? "#ff0000" : "#00ff00")};
  font: bold 14px/24px ${PLAIN_FONT};
  text-align: center;
`;

/* ---------- composition ---------- */

function Logo({ as: Box = LogoBox, markHeight, textSize }) {
  return (
    <Box>
      <LogoMark height={markHeight} />
      <LogoText $size={textSize}>PT. DUA SAMUDERA PERKASA</LogoText>
    </Box>
  );
}

function Tools({ names, gap, height }) {
  return (
    <ToolRow $gap={gap} $height={height}>
      {names.map((name, i) =>
        name === "|" ? <Divider key={i} /> : (
          <ToolButton key={i} type="button" aria-label={name}><ToolIcon name={name} /></ToolButton>
        )
      )}
    </ToolRow>
  );
}

function AlarmList() {
  return (
    <AlarmControl>
      <Tools names={["ackOne", "ackAll", "|", "updown", "first", "prev", "next", "last"]} gap={9} height={33} />
      <AlarmBody>
        <GridTable $shade="n+9">
          <colgroup>
            <col style={{ width: 27 }} /><col style={{ width: 104 }} /><col style={{ width: 129 }} />
            <col style={{ width: 79 }} /><col /><col style={{ width: 229 }} /><col style={{ width: 76 }} />
          </colgroup>
          <thead>
            <tr><th /><th>Date</th><th>Time</th><th>Number</th><th>Message text</th><th>Point of error</th><th /></tr>
          </thead>
          <tbody>
            {ALARMS.map((a) => (
              <tr key={a.no}>
                <RowHead $current={a.current}>{a.no}</RowHead>
                <AlarmCell>{a.date}</AlarmCell><AlarmCell>{a.time}</AlarmCell><AlarmCell>{a.number}</AlarmCell>
                <AlarmCell>{a.text}</AlarmCell><AlarmCell /><td />
              </tr>
            ))}
            <tr><RowHead>5</RowHead><td /><td /><td /><td /><td /><td /></tr>
          </tbody>
        </GridTable>
        <ScrollTrack><span>▲</span><span>▼</span></ScrollTrack>
      </AlarmBody>
    </AlarmControl>
  );
}

function TrendWindow() {
  return (
    <WindowFrame>
      <WindowTitle>
        <svg width="14" height="14" viewBox="0 0 14 14" aria-hidden="true">
          <rect width="14" height="13" fill="#fff" /><path d="M0 13.5h14" stroke="#33c" />
          <path d="M1 2h12M1 5h12M1 8h12M1 11h12" stroke="#556" strokeWidth="2" strokeDasharray="3 1" />
        </svg>
        WinCC OnlineTableControl
        <CloseButton type="button" aria-label="Close">✕</CloseButton>
      </WindowTitle>
      <WindowBody>
        <Tools
          names={["rewind", "forward", "|", "pencil", "|", "binders", "columns", "clock", "|", "toLeft", "toRight", "|", "pause", "refresh", "|", "exportList"]}
          gap={8} height={34}
        />
        <TrendClip>
          <GridTable $shade="even">
            <colgroup>
              <col style={{ width: 41 }} />
              {[149, 149, 149, 149, 149, 149, 149, 109, 109, 109, 109, 109].map((w, i) => <col key={i} style={{ width: w }} />)}
              <col />
            </colgroup>
            <thead>
              <tr><th /><th>Time</th>{TREND_COLUMNS.map((c) => <th key={c}>{c}</th>)}<th /></tr>
            </thead>
            <tbody>
              {TREND_ROWS.map((cells, r) => (
                <tr key={r}>
                  <RowHead $current={r === TREND_ROWS.length - 1}>{FIRST_ROW + r}</RowHead>
                  {cells.map((c, i) => <td key={i}>{c}</td>)}<td />
                </tr>
              ))}
              <tr><RowHead>{FIRST_ROW + TREND_ROWS.length}</RowHead>{Array.from({ length: 13 }, (_, i) => <td key={i} />)}</tr>
            </tbody>
          </GridTable>
        </TrendClip>
        <StatusBar>
          Ready
          <StatusCell $push>Row</StatusCell>
          <StatusCell />
          <StatusCell>
            <svg width="18" height="16" viewBox="0 0 18 16" aria-hidden="true">
              <rect x="9" y="1" width="8" height="7" fill="#1c8c1c" stroke="#777" /><rect x="1" y="5" width="8" height="7" fill="#1c8c1c" stroke="#777" />
              <path d="M2 14h8M12 10h5" stroke="#999" strokeWidth="2" />
            </svg>
          </StatusCell>
          <StatusCell>11:11:32 AM</StatusCell>
        </StatusBar>
      </WindowBody>
    </WindowFrame>
  );
}

function FaultList({ title, items }) {
  return (
    <section>
      <Heading $indent={14}><Lamp />{title}</Heading>
      <RowList $top={7}>
        {items.map((item, i) => (
          <Row key={i} $size={item.startsWith("~") ? 11 : 14}>
            {item && <Lamp />}{item.replace("~", "")}
          </Row>
        ))}
      </RowList>
    </section>
  );
}

function DeviceCard({ title, height, after, icon, below, top, gap, states = [], wide }) {
  return (
    <Card $height={height} $after={after}>
      <CardTitle $wide={wide}>{title}</CardTitle>
      <CardBody $top={top} $gap={gap}>
        {icon && <CardIcon $below={below}>{icon}</CardIcon>}
        {states.map((s) => <State key={s} $wide={wide} $bad={s === "Fault" || s === "Enggage"}>{s}</State>)}
      </CardBody>
    </Card>
  );
}

export default function App() {
  return (
    <Desktop>
      <GlobalStyle />
      <Station>
        <TopArea>
          <TopLeft>
            <AlarmList />
            <Readings>
              {READINGS.map((pair, c) => (
                <ReadingPair key={c}>
                  {pair.map(([label, value, unit, size]) => (
                    <Reading key={label} $first={c === 0} $label={LABEL_WIDTHS[c]}>
                      <ReadingLabel $size={size}>{label}</ReadingLabel>
                      <ReadingValue>{value}</ReadingValue>
                      <ReadingUnit>{unit}</ReadingUnit>
                    </Reading>
                  ))}
                </ReadingPair>
              ))}
            </Readings>
          </TopLeft>
          <Identity>
            <Logo markHeight={60} textSize={13} />
            <Clock>12/17/2022 11:11:32 AM</Clock>
            <UserButton type="button">Engineer</UserButton>
          </Identity>
        </TopArea>
        <Middle>
          <PageArea>
            <PageTitle>Data Record Generator Oil Line</PageTitle>
            <PageLinks>
              {PAGE_LINKS.map((l, i) => <BevelButton key={i} type="button">{l}</BevelButton>)}
            </PageLinks>
            <TrendWindow />
          </PageArea>
          <SideBar>
            <SideButton type="button" aria-label="Back"><TurnArrow /></SideButton>
            <SideButton type="button" aria-label="Forward"><TurnArrow flip /></SideButton>
            {SIDE_LINKS.map((l, i) => (
              <SideButton key={i} type="button" $dim={i === SIDE_LINKS.length - 1} $size={l === "Record" ? 13 : 14}>{l}</SideButton>
            ))}
          </SideBar>
        </Middle>
        <SystemBar>
          {SYSTEM_LINKS.map(({ label, active, wrap }) => (
            <SystemButton key={label} type="button" $active={active} $wrap={wrap}>{label}</SystemButton>
          ))}
        </SystemBar>
      </Station>

      <Overview>
        <Band $height={28} />
        <PlantHeader>
          <HeaderLine viewBox="0 0 1920 80" preserveAspectRatio="none" aria-hidden="true">
            <path
              d="M36 2V30C36 40 42 46 52 46H572C582 46 586 51 592 58L604 69C607 72 609 73 616 73H1246C1251 73 1253 71 1256 67L1276 50C1280 47 1284 46 1290 46H1812C1822 46 1829 38 1829 30V2"
              fill="none" stroke="#111" strokeWidth="2"
            />
          </HeaderLine>
          <Tab type="button">OVERVIEW</Tab>
          <Tab type="button" $active>TURBINE</Tab>
          <Logo as={PlantLogo} markHeight={51} textSize={9} />
          <PlantTitle>POWER PLANT 15 MW</PlantTitle>
        </PlantHeader>
        <PlantBody>
          <Lists>
            <ListColumns>
              <FaultList title="TURBINE HEAVY FAULT" items={HEAVY_FAULTS} />
              <FaultList title="TURBINE LIGHT FAULT" items={LIGHT_FAULTS} />
              <section>
                <Heading $indent={22}>TURBINE PARAMETER</Heading>
                <ParamTable $top={7} $indent={9}>
                  <colgroup><col style={{ width: 343 }} /><col /><col style={{ width: 45 }} /></colgroup>
                  <tbody>
                    {TURBINE_PARAMS.map(([label, value, unit], i) => (
                      <tr key={i}>
                        <th>{label}</th><td>{value}</td><UnitCell $small={unit.startsWith("Kg")}>{unit}</UnitCell>
                      </tr>
                    ))}
                  </tbody>
                </ParamTable>
              </section>
            </ListColumns>
            <GeneratorPanel>
              <Heading $center>GENERATOR PARAMETER</Heading>
              <GeneratorTables>
                {GENERATOR_PARAMS.map((t, i) => (
                  <ParamTable key={i} $indent={t.indent}>
                    <colgroup><col style={{ width: t.valueAt }} /><col /><col style={{ width: 48 }} /></colgroup>
                    <tbody>
                      {t.rows.map(([label, value], r) => (
                        <tr key={r}><th>{label}</th><td>{value}</td><UnitCell>°C</UnitCell></tr>
                      ))}
                    </tbody>
                  </ParamTable>
                ))}
              </GeneratorTables>
            </GeneratorPanel>
          </Lists>
          <Equipment>
            <CardColumns>
              <CardStack>
                <DeviceCard title="Aux Oil Pump" height={220} after={20} icon={<PumpIcon />} top={14} below={7} gap={6} states={["Auto", "Remote", "Fault"]} />
                <DeviceCard title="Vapor Fan" height={221} after={9} icon={<FanIcon />} top={14} below={36} gap={8} states={["Remote", "Fault"]} />
                <DeviceCard title="Tuning Device" height={221} icon={<PumpIcon />} top={14} below={3} gap={7} states={["Auto", "Remote", "Fault"]} />
              </CardStack>
              <CardStack>
                <DeviceCard title="EMG Oil Pump" height={220} after={20} icon={<PumpIcon />} top={14} below={8} gap={12} states={["Auto", "Fault"]} />
                <DeviceCard title="Gland Fan" height={221} after={9} icon={<FanIcon />} top={14} below={36} gap={8} states={["Remote", "Fault"]} />
                <DeviceCard title="ESV" height={107} after={3} icon={<ValveIcon />} top={4} />
                <DeviceCard title="TURNING CLUTCH" height={113} top={4} gap={11} states={["Enggage", "Dis-Enggage"]} wide />
              </CardStack>
            </CardColumns>
            <RowList $top={11}>
              {SIGNALS.map((s) => <Row key={s} $size={14}><Lamp />{s}</Row>)}
            </RowList>
          </Equipment>
        </PlantBody>
        <Band $height={20} />
      </Overview>
    </Desktop>
  );
}
